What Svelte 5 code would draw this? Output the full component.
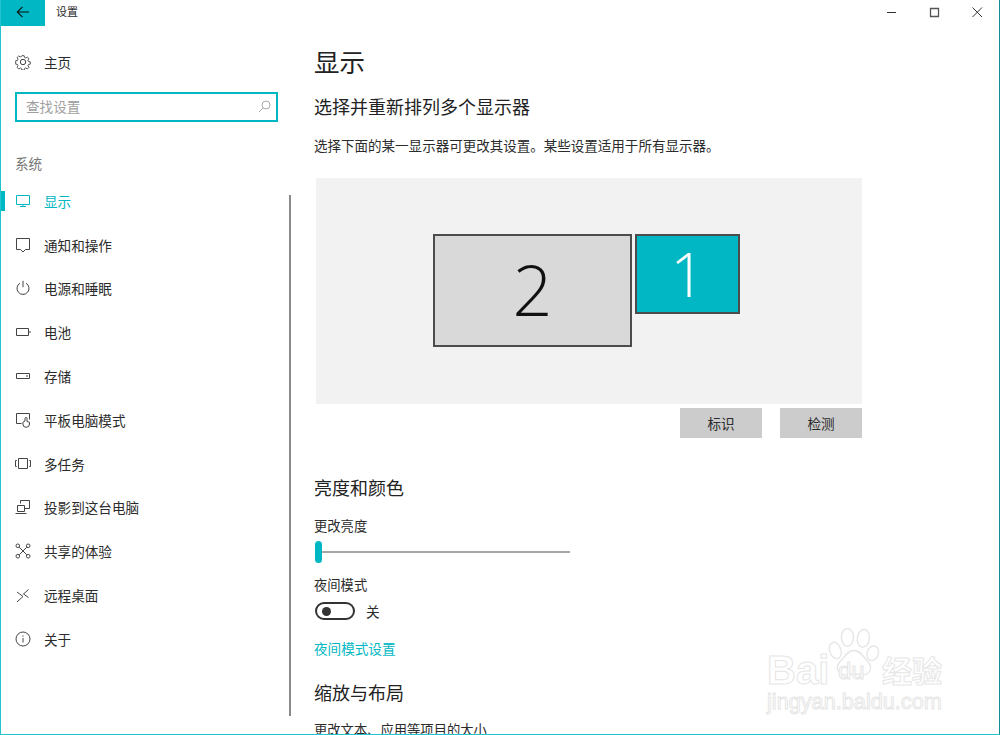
<script>
    const navItems = [
        { label: "显示", icon: "display", active: true },
        { label: "通知和操作", icon: "notify" },
        { label: "电源和睡眠", icon: "power" },
        { label: "电池", icon: "battery" },
        { label: "存储", icon: "storage" },
        { label: "平板电脑模式", icon: "tablet" },
        { label: "多任务", icon: "multitask" },
        { label: "投影到这台电脑", icon: "project" },
        { label: "共享的体验", icon: "share" },
        { label: "远程桌面", icon: "remote" },
        { label: "关于", icon: "about" }
    ];
</script>

{#snippet navIcon(name)}
    <svg class="nav-icon" width="16" height="16" viewBox="0 0 16 16" fill="none" stroke="currentColor" stroke-width="1">
        {#if name === "display"}
            <path d="M1.500 2.500h13v9h-13zM5 13.500h6M8 11.500v2" />
        {:else if name === "notify"}
            <path d="M1.500 1.500h13v11h-4l-2.500 2.500-2.500-2.500h-4z" />
        {:else if name === "power"}
            <path d="M5 3.200a6 6 0 1 0 6 0M8 .8v6.400" />
        {:else if name === "battery"}
            <path d="M1.500 4.500h12v7h-12zM15 7v2" />
        {:else if name === "storage"}
            <path d="M1.500 5.500h13v5h-13zM11 8h2" />
        {:else if name === "tablet"}
            <path d="M6.500 11.500h-5v-10h13v6" />
            <path d="M10 9V6.500a1 1 0 0 1 2 0v3l2.500.8v1.700a3.300 3.300 0 0 1-6.600 0v-1.700z" />
        {:else if name === "multitask"}
            <path d="M3.500 2.500h9v10h-9zM1.800 4.500H.5v6h1.300M14.200 4.500h1.300v6h-1.300" />
        {:else if name === "project"}
            <path d="M5.500 4.500v-3h9v8h-5" />
            <path d="M2.500 6.500h7v6h-7zM.5 14.500h11" />
        {:else if name === "share"}
            <circle cx="2.800" cy="2.800" r="1.800" /><circle cx="13.200" cy="2.800" r="1.800" />
            <circle cx="2.800" cy="13.200" r="1.800" /><circle cx="13.200" cy="13.200" r="1.800" />
            <path d="M4.200 4.200l7.600 7.600M11.800 4.200l-7.600 7.600" />
        {:else if name === "remote"}
            <path d="M2 5l6 4.500L2 15M13.500 2.500L8.500 7l5 3.500" />
        {:else if name === "about"}
            <circle cx="8" cy="8" r="7" /><path d="M8 7v4.500M8 4.500v1.200" />
        {/if}
    </svg>
{/snippet}

<div class="window">
    <header class="titlebar">
        <button class="back" aria-label="返回">
            <svg width="14" height="14" viewBox="0 0 14 14" fill="none" stroke="#111" stroke-width="1.100">
                <path d="M13 7H1.500M6.500 1.800L1.300 7l5.200 5.200" />
            </svg>
        </button>
        <span class="app-title">设置</span>
        <div class="win-controls">
            <svg width="12" height="12" viewBox="0 0 12 12" stroke="#333" fill="none"><path d="M2 6.500h9" /></svg>
            <svg width="12" height="12" viewBox="0 0 12 12" stroke="#555" fill="none" stroke-width="1.300"><path d="M2.500 2.500h8v8h-8z" /></svg>
            <svg width="12" height="12" viewBox="0 0 12 12" stroke="#333" fill="none"><path d="M1.500 1.500l9.500 9.500M11 1.500l-9.500 9.500" /></svg>
        </div>
    </header>

    <div class="body">
        <aside class="sidebar">
            <div class="home">
                <svg class="nav-icon" width="16" height="16" viewBox="0 0 16 16" fill="none" stroke="currentColor">
                    <circle cx="8" cy="8" r="2.700" />
                    <path d="M6.700 1h2.600l.4 2 1.300.6 1.800-1.100 1.800 1.800-1.100 1.800.6 1.300 2 .4v2.600l-2 .4-.6 1.300 1.100 1.800-1.800 1.800-1.800-1.100-1.300.6-.4 1.800H6.700l-.4-1.800-1.300-.6-1.800 1.100-1.800-1.800 1.100-1.800-.6-1.300-2-.4V6.600l2-.4.600-1.300-1.100-1.800 1.800-1.800 1.800 1.100 1.300-.6z" transform="translate(.8 .8) scale(.9)" />
                </svg>
                <span>主页</span>
            </div>
            <div class="search">
                <span>查找设置</span>
                <svg width="13" height="13" viewBox="0 0 13 13" fill="none" stroke="#aaa">
                    <circle cx="8" cy="5" r="4" /><path d="M5 8l-4 4" />
                </svg>
            </div>
            <div class="group-label">系统</div>
            <div class="nav-wrap">
                <nav class="nav">
                    {#each navItems as item}
                        <div class="nav-item" class:active={item.active}>
                            {@render navIcon(item.icon)}
                            <span>{item.label}</span>
                        </div>
                    {/each}
                </nav>
                <div class="scrollbar"></div>
            </div>
        </aside>

        <main class="content">
            <h1>显示</h1>
            <h2 class="first">选择并重新排列多个显示器</h2>
            <p class="desc">选择下面的某一显示器可更改其设置。某些设置适用于所有显示器。</p>

            <div class="canvas">
                <div class="monitor two"><span>2</span></div>
                <div class="monitor one"><span>1</span></div>
            </div>
            <div class="actions">
                <button>标识</button>
                <button>检测</button>
            </div>

            <h2 class="brightness">亮度和颜色</h2>
            <div class="label">更改亮度</div>
            <div class="slider"><div class="thumb"></div></div>
            <div class="label night">夜间模式</div>
            <div class="toggle-row">
                <div class="toggle"><div class="knob"></div></div>
                <span>关</span>
            </div>
            <a class="link" href="#night">夜间模式设置</a>
            <h2 class="scale">缩放与布局</h2>
            <div class="label cut">更改文本、应用等项目的大小</div>
        </main>
    </div>

    <div class="watermark" aria-hidden="true">
        <svg class="paw" width="52" height="58" viewBox="0 0 54 62" fill="#fff" stroke="#e6e6e6" stroke-width="1.500">
            <ellipse cx="7" cy="24" rx="6" ry="9" transform="rotate(-20 7 24)" />
            <ellipse cx="20" cy="10" rx="6.500" ry="9.500" />
            <ellipse cx="37" cy="11" rx="6.500" ry="9.500" transform="rotate(8 37 11)" />
            <ellipse cx="47" cy="27" rx="6" ry="8" transform="rotate(20 47 27)" />
            <path d="M27 24c7 0 10 7 15 12 6 7 1 15-7 14-5-1-11-1-16 0-8 1-13-7-7-14 5-5 8-12 15-12z" />
        </svg>
        <span class="wm-bai">Bai</span>
        <span class="wm-du">du</span>
        <span class="wm-cn">经验</span>
        <span class="wm-url">jingyan.baidu.com</span>
    </div>
</div>

<style>
    :global(body) {
        margin: 0;
        background: #fff;
    }

    .window {
        position: relative;
        box-sizing: border-box;
        width: 1000px;
        height: 735px;
        overflow: hidden;
        background: #fff;
        border-left: 1px solid #22c4d0;
        border-bottom: 1px solid #22c4d0;
        border-right: 1px solid #0f8f99;
        font-family: "Noto Sans CJK SC", "Liberation Sans", sans-serif;
        color: #2b2b2b;
    }

    .titlebar {
        display: flex;
        align-items: flex-start;
        height: 26px;
    }

    .back {
        display: flex;
        align-items: center;
        justify-content: center;
        width: 44px;
        height: 26px;
        margin: 0;
        padding: 0 0 2px;
        border: none;
        background: #00b7c3;
    }

    .app-title {
        margin-left: 11px;
        font-size: 11px;
        line-height: 23px;
    }

    .win-controls {
        display: flex;
        gap: 31px;
        margin-left: auto;
        margin-right: 16px;
        padding-top: 6px;
    }

    .body {
        display: flex;
        height: 708px;
    }

    .sidebar {
        box-sizing: border-box;
        width: 313px;
        flex: none;
        padding-top: 25px;
    }

    .nav-icon {
        flex: none;
        color: #444;
    }

    .home {
        display: flex;
        align-items: center;
        gap: 13px;
        height: 22px;
        padding-left: 14px;
        font-size: 13.600px;
    }

    .search {
        display: flex;
        align-items: center;
        justify-content: space-between;
        box-sizing: border-box;
        width: 263px;
        height: 30px;
        margin: 19px 0 0 14px;
        padding: 0 5px 2px 9px;
        border: 2px solid #00b7c3;
        font-size: 13.600px;
        color: #a0a0a0;
    }

    .group-label {
        margin: 31px 0 0 14px;
        font-size: 13.600px;
        line-height: 20px;
        color: #777;
    }

    .nav-wrap {
        display: flex;
        margin-top: 6px;
    }

    .nav {
        width: 288px;
        flex: none;
    }

    .nav-item {
        display: flex;
        align-items: center;
        gap: 13px;
        box-sizing: border-box;
        height: 43.800px;
        padding-left: 14px;
        font-size: 13.600px;
        position: relative;
    }

    .nav-item.active,
    .nav-item.active .nav-icon {
        color: #00b7c3;
    }

    .nav-item.active::before {
        content: "";
        position: absolute;
        left: 0;
        top: 12px;
        width: 4px;
        height: 20px;
        background: #00b7c3;
    }

    .scrollbar {
        width: 2px;
        height: 521px;
        margin-top: 16px;
        background: #8a8a8a;
    }

    .content {
        flex: 1;
        min-width: 0;
    }

    h1 {
        margin: 16px 0 0;
        font-size: 25.500px;
        font-weight: 400;
        line-height: 38px;
        color: #222;
    }

    h2 {
        margin: 0;
        font-size: 18px;
        font-weight: 400;
        line-height: 26px;
        color: #222;
    }

    h2.first {
        margin-top: 13px;
    }

    .desc {
        margin: 16px 0 0;
        font-size: 13.530px;
        line-height: 20px;
    }

    .canvas {
        display: flex;
        align-items: flex-start;
        gap: 3px;
        box-sizing: border-box;
        width: 546px;
        height: 226px;
        margin: 23px 0 0 2px;
        padding: 56px 0 0 117px;
        background: #f2f2f2;
    }

    .monitor {
        display: flex;
        align-items: center;
        justify-content: center;
        box-sizing: border-box;
        border: 2px solid #4c4c4c;
        font-family: "Open Sans", sans-serif;
        font-weight: 300;
    }

    .two {
        width: 199px;
        height: 113px;
        padding-bottom: 4px;
        background: #d9d9d9;
        color: #111;
        font-size: 70px;
    }

    .one {
        width: 105px;
        height: 80px;
        background: #00b7c3;
        color: #fff;
        font-size: 60px;
    }

    .monitor span {
        line-height: 1;
    }

    .actions {
        display: flex;
        justify-content: flex-end;
        gap: 18px;
        width: 548px;
        margin-top: 4px;
    }

    .actions button {
        width: 82px;
        height: 30px;
        padding: 0;
        border: none;
        background: #cccccc;
        color: #2b2b2b;
        font: inherit;
        font-size: 13.600px;
    }

    h2.brightness {
        margin-top: 36px;
    }

    .label {
        font-size: 13.300px;
        line-height: 20px;
    }

    .brightness + .label {
        margin-top: 16px;
    }

    .slider {
        position: relative;
        display: flex;
        align-items: center;
        width: 255px;
        height: 22px;
        margin: 5px 0 0 1px;
    }

    .slider::before {
        content: "";
        flex: 1;
        height: 2px;
        background: #a6a6a6;
    }

    .thumb {
        position: absolute;
        left: 0;
        top: 0;
        width: 7px;
        height: 22px;
        border-radius: 4px;
        background: #00b7c3;
    }

    .label.night {
        margin-top: 12px;
    }

    .toggle-row {
        display: flex;
        align-items: center;
        gap: 11px;
        height: 18px;
        margin: 7px 0 0 1px;
        font-size: 13.600px;
    }

    .toggle {
        display: flex;
        align-items: center;
        box-sizing: border-box;
        width: 40px;
        height: 18px;
        padding-left: 5px;
        border: 2px solid #333;
        border-radius: 9px;
    }

    .knob {
        width: 9px;
        height: 9px;
        border-radius: 50%;
        background: #333;
    }

    .link {
        display: block;
        margin-top: 18px;
        font-size: 13.600px;
        line-height: 20px;
        color: #00b7c3;
        text-decoration: none;
    }

    h2.scale {
        margin-top: 21px;
    }

    .label.cut {
        margin-top: 15px;
    }

    .watermark {
        position: absolute;
        left: 764px;
        top: 627px;
        width: 190px;
        height: 90px;
        color: #fff;
        font-family: "Liberation Sans", sans-serif;
        font-weight: 700;
        -webkit-text-stroke: 1px #e6e6e6;
    }

    .watermark span {
        position: absolute;
        white-space: nowrap;
    }

    .paw {
        position: absolute;
        left: 63px;
        top: 1px;
    }

    .wm-bai {
        left: 2px;
        top: 20px;
        font-size: 40px;
        line-height: 46px;
    }

    .wm-du {
        left: 73px;
        top: 30px;
        font-size: 24px;
        line-height: 28px;
        font-weight: 400;
    }

    .wm-cn {
        left: 117px;
        top: 20px;
        font-size: 30px;
        line-height: 44px;
        font-family: "Noto Sans CJK SC", sans-serif;
    }

    .wm-url {
        left: 2px;
        top: 62px;
        font-size: 21.700px;
        line-height: 26px;
        font-weight: 400;
    }
</style>
